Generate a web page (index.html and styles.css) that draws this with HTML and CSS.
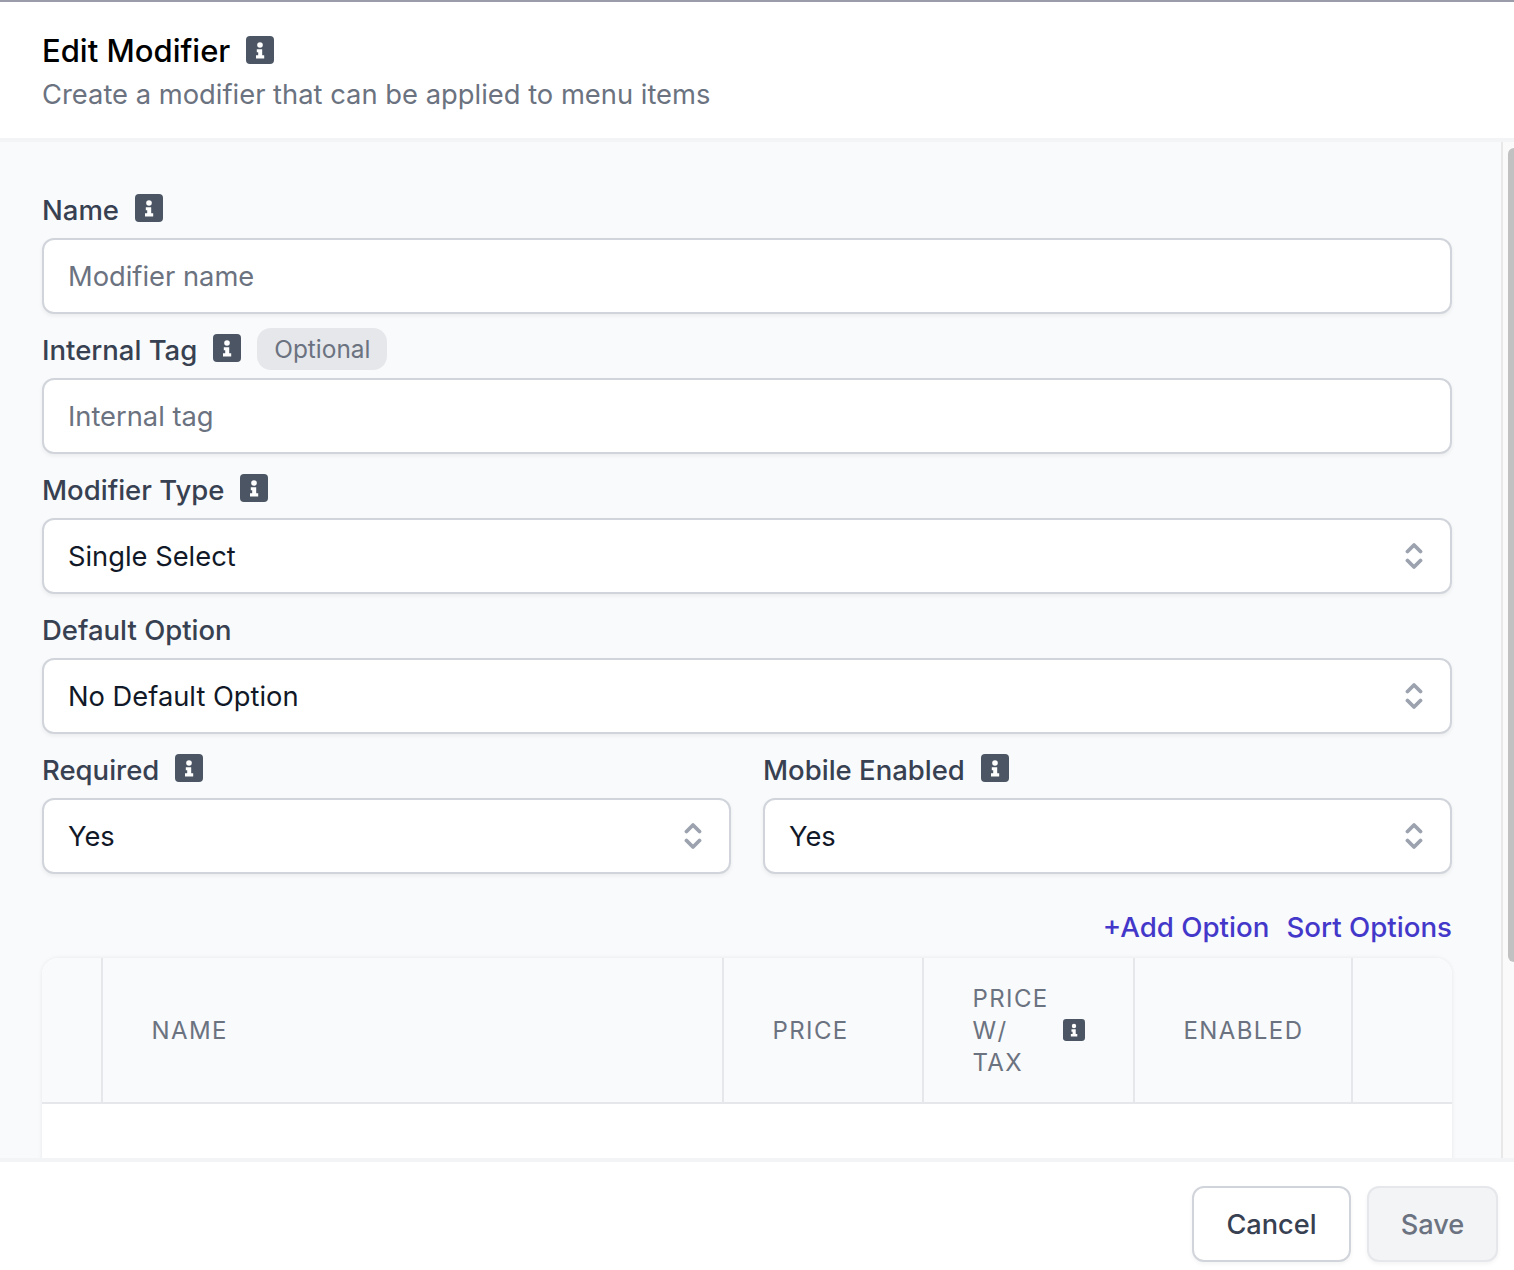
FILE: index.html
```html
<!DOCTYPE html>
<html lang="en">
<head>
<meta charset="utf-8">
<title>Edit Modifier</title>
<link rel="stylesheet" href="styles.css">
</head>
<body>
<svg class="defs" width="0" height="0" aria-hidden="true">
  <symbol id="info" viewBox="0 0 28 28">
    <rect width="28" height="28" rx="4" fill="#4b5563"/>
    <circle cx="14" cy="9" r="2.8" fill="#fff"/>
    <path d="M10.8 13.2h5.4v6h2v3.2h-8.2v-3.2h2.2v-3h-1.4z" fill="#fff"/>
  </symbol>
  <symbol id="updown" viewBox="0 0 18 28">
    <path d="M2.5 9.5 9 3l6.500 6.500M2.500 18.500 9 25l6.500-6.500" fill="none" stroke="#9ca3af" stroke-width="3.800" stroke-linecap="round" stroke-linejoin="round"/>
  </symbol>
</svg>
<div class="page">
  <header class="head">
    <div class="title-row">
      <h1 class="title">Edit Modifier</h1>
      <svg class="ico"><use href="#info"/></svg>
    </div>
    <p class="subtitle">Create a modifier that can be applied to menu items</p>
  </header>
  <div class="middle">
    <main class="content">
      <div class="field">
        <div class="label-row"><label class="label">Name</label><svg class="ico"><use href="#info"/></svg></div>
        <input class="control" type="text" placeholder="Modifier name">
      </div>
      <div class="field">
        <div class="label-row"><label class="label">Internal Tag</label><svg class="ico"><use href="#info"/></svg><span class="badge">Optional</span></div>
        <input class="control" type="text" placeholder="Internal tag">
      </div>
      <div class="field">
        <div class="label-row"><label class="label">Modifier Type</label><svg class="ico"><use href="#info"/></svg></div>
        <div class="select-wrap">
          <select class="control select"><option>Single Select</option></select>
          <svg class="updown"><use href="#updown"/></svg>
        </div>
      </div>
      <div class="field">
        <div class="label-row"><label class="label">Default Option</label></div>
        <div class="select-wrap">
          <select class="control select"><option>No Default Option</option></select>
          <svg class="updown"><use href="#updown"/></svg>
        </div>
      </div>
      <div class="two-col">
        <div class="field">
          <div class="label-row"><label class="label">Required</label><svg class="ico"><use href="#info"/></svg></div>
          <div class="select-wrap">
            <select class="control select"><option>Yes</option></select>
            <svg class="updown"><use href="#updown"/></svg>
          </div>
        </div>
        <div class="field">
          <div class="label-row"><label class="label">Mobile Enabled</label><svg class="ico"><use href="#info"/></svg></div>
          <div class="select-wrap">
            <select class="control select"><option>Yes</option></select>
            <svg class="updown"><use href="#updown"/></svg>
          </div>
        </div>
      </div>
      <div class="links">
        <a class="link">+Add Option</a>
        <a class="link">Sort Options</a>
      </div>
      <div class="table-card">
        <table class="table">
          <colgroup>
            <col class="c1"><col class="c2"><col class="c3"><col class="c4"><col class="c5"><col class="c6">
          </colgroup>
          <thead>
            <tr>
              <th></th>
              <th>Name</th>
              <th>Price</th>
              <th><div class="th-flex"><span class="th-wrap">Price w/ tax</span><svg class="ico-sm"><use href="#info"/></svg></div></th>
              <th>Enabled</th>
              <th></th>
            </tr>
          </thead>
          <tbody>
            <tr class="empty-row"><td colspan="6"></td></tr>
          </tbody>
        </table>
      </div>
    </main>
    <div class="scroll-track"><div class="scroll-thumb"></div></div>
  </div>
  <footer class="foot">
    <button class="btn cancel" type="button">Cancel</button>
    <button class="btn save" type="button">Save</button>
  </footer>
</div>
</body>
</html>
```
FILE: styles.css
```css
* { box-sizing: border-box; }
html, body { margin: 0; height: 100%; }
body { font-family: Inter, "Liberation Sans", sans-serif; background: #fff; color: #374151; overflow: hidden; }
.defs { position: absolute; }
.page { height: 1270px; display: flex; flex-direction: column; border-top: 2px solid #9a9ca9; }
.head { height: 140px; flex: none; padding: 30px 42px 0; background: #fff; border-bottom: 4px solid #f3f4f6; }
.title-row { display: flex; align-items: center; gap: 16px; height: 36px; }
.title { margin: 0; padding-top: 2px; font-size: 31px; line-height: 36px; font-weight: 500; color: #000; }
.subtitle { margin: 7px 0 0; font-size: 27.35px; line-height: 40px; color: #6b7280; }
.ico { width: 28px; height: 28px; flex: none; }
.label-row .ico { margin-top: -2px; }
.ico-sm { width: 22px; height: 22px; flex: none; margin-top: -2px; }
.middle { flex: 1; min-height: 0; display: flex; background: #f9fafb; }
.content { flex: 1; min-width: 0; padding: 46px 49px 0 42px; overflow: hidden; display: flex; flex-direction: column; gap: 14px; }
.field { display: flex; flex-direction: column; gap: 8px; flex: none; }
.label-row { display: flex; align-items: center; gap: 16px; height: 42px; }
.label { font-size: 27.5px; line-height: 42px; padding-top: 2px; font-weight: 500; color: #374151; }
.badge { height: 42px; padding: 0 17px; border-radius: 14px; background: #e5e7eb; color: #6b7280; font-size: 24.4px; line-height: 42px; font-weight: 400; }
.control { display: block; width: 100%; height: 76px; padding: 0 24px; font: 400 27.3px Inter, "Liberation Sans", sans-serif; color: #111827; background: #fff; border: 2px solid #d1d5db; border-radius: 12px; box-shadow: 0 2px 4px rgba(0,0,0,.06); outline: none; }
.control::placeholder { color: #6b7280; opacity: 1; }
.select { appearance: none; -webkit-appearance: none; padding-right: 60px; }
.select-wrap { position: relative; }
.updown { position: absolute; right: 29px; top: 24px; width: 18px; height: 28px; pointer-events: none; }
.two-col { display: grid; grid-template-columns: 689px 689px; gap: 32px; flex: none; }
.links { display: flex; justify-content: flex-end; gap: 17px; height: 40px; margin-top: 19px; flex: none; }
.link { font-size: 27.7px; line-height: 40px; font-weight: 500; color: #4338ca; }
.table-card { flex: none; margin-top: -3px; width: 1410px; border-radius: 16px 16px 0 0; overflow: hidden; box-shadow: 0 0 4px rgba(0,0,0,.08); background: #fff; }
.table { width: 1410px; table-layout: fixed; border-collapse: collapse; }
.c1 { width: 60px; }
.c2 { width: 621px; }
.c3 { width: 200px; }
.c4 { width: 211px; }
.c5 { width: 218px; }
.c6 { width: 100px; }
.table th { height: 145px; padding: 2px 48px 0 48.500px; background: #f9fafb; border-left: 2px solid #e5e7eb; border-bottom: 2px solid #e5e7eb; font-size: 24px; line-height: 32px; font-weight: 400; letter-spacing: 1.400px; text-transform: uppercase; text-align: left; color: #6b7280; }
.table th:first-child { border-left: 0; }
.th-flex { display: flex; align-items: center; justify-content: space-between; }
.th-wrap { width: 80px; }
.empty-row td { height: 120px; background: #fff; }
.scroll-track { flex: none; width: 13px; border-left: 2px solid #e8e8e8; background: #fafafa; padding: 6px 0 0 5px; }
.scroll-thumb { width: 6px; height: 814px; border-radius: 6px 0 0 6px; background: #c1c1c1; }
.foot { flex: none; height: 112px; background: #fff; border-top: 4px solid #f3f4f6; padding: 24px 16px 8px; display: flex; justify-content: flex-end; gap: 16px; }
.btn { height: 76px; padding-top: 1px; border-radius: 12px; border: 2px solid #d1d5db; font: 500 27.2px Inter, "Liberation Sans", sans-serif; box-shadow: 0 2px 4px rgba(0,0,0,.05); }
.cancel { width: 159px; background: #fff; color: #374151; }
.save { width: 131px; background: #f3f4f6; color: #6b7280; border-color: #e5e7eb; }
```
